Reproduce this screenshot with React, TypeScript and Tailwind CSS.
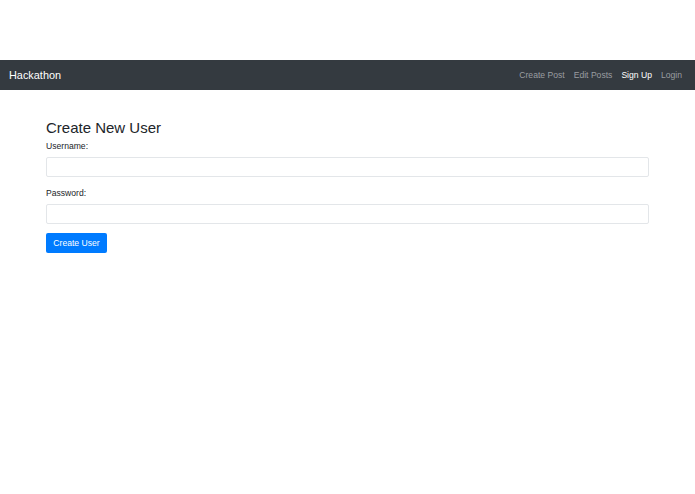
import React, { useState } from "react";

const navLinks = [
  { label: "Create Post", active: false },
  { label: "Edit Posts", active: false },
  { label: "Sign Up", active: true },
  { label: "Login", active: false },
];

const Navbar: React.FC = () => (
  <nav className="flex h-[30px] items-center justify-between bg-[#343a40] pl-[9px] pr-[8.5px]">
    <a href="#" className="text-[10.9px] leading-none text-white">
      Hackathon
    </a>
    <ul className="flex items-center">
      {navLinks.map((link) => (
        <li key={link.label}>
          <a
            href="#"
            className={`block px-[4.5px] text-[8.6px] leading-none ${link.active ? "text-white" : "text-[#9a9da0]"}`}>
            {link.label}
          </a>
        </li>
      ))}
    </ul>
  </nav>
);

const App: React.FC = () => {
  const [username, setUsername] = useState("");
  const [password, setPassword] = useState("");

  return (
    <div className="min-h-[494px] bg-white font-['Liberation_Sans',Arial,sans-serif] text-[#212529]">
      <div className="h-[60px]" />
      <Navbar />
      <div className="mx-auto w-[603px] pt-[29px]">
        <h3 className="mb-[3px] text-[15px] leading-[18px] font-normal">Create New User</h3>
        <form onSubmit={(e) => e.preventDefault()}>
          <div className="mb-[10px]">
            <label htmlFor="username" className="mb-[5px] block text-[8.6px] leading-[12px]">
              Username:
            </label>
            <input
              id="username"
              type="text"
              value={username}
              onChange={(e) => setUsername(e.target.value)}
              className="block h-[20px] w-full rounded-[2px] border border-[#e3e6e9] px-[6px] text-[8.6px] outline-none"
            />
          </div>
          <div className="mb-[9px]">
            <label htmlFor="password" className="mb-[5px] block text-[8.6px] leading-[12px]">
              Password:
            </label>
            <input
              id="password"
              type="password"
              value={password}
              onChange={(e) => setPassword(e.target.value)}
              className="block h-[20px] w-full rounded-[2px] border border-[#e3e6e9] px-[6px] text-[8.6px] outline-none"
            />
          </div>
          <button
            type="submit"
            className="block h-[20px] w-[61px] rounded-[2px] bg-[#007bff] text-center text-[8.6px] leading-none text-white">
            Create User
          </button>
        </form>
      </div>
    </div>
  );
};

export default App;
